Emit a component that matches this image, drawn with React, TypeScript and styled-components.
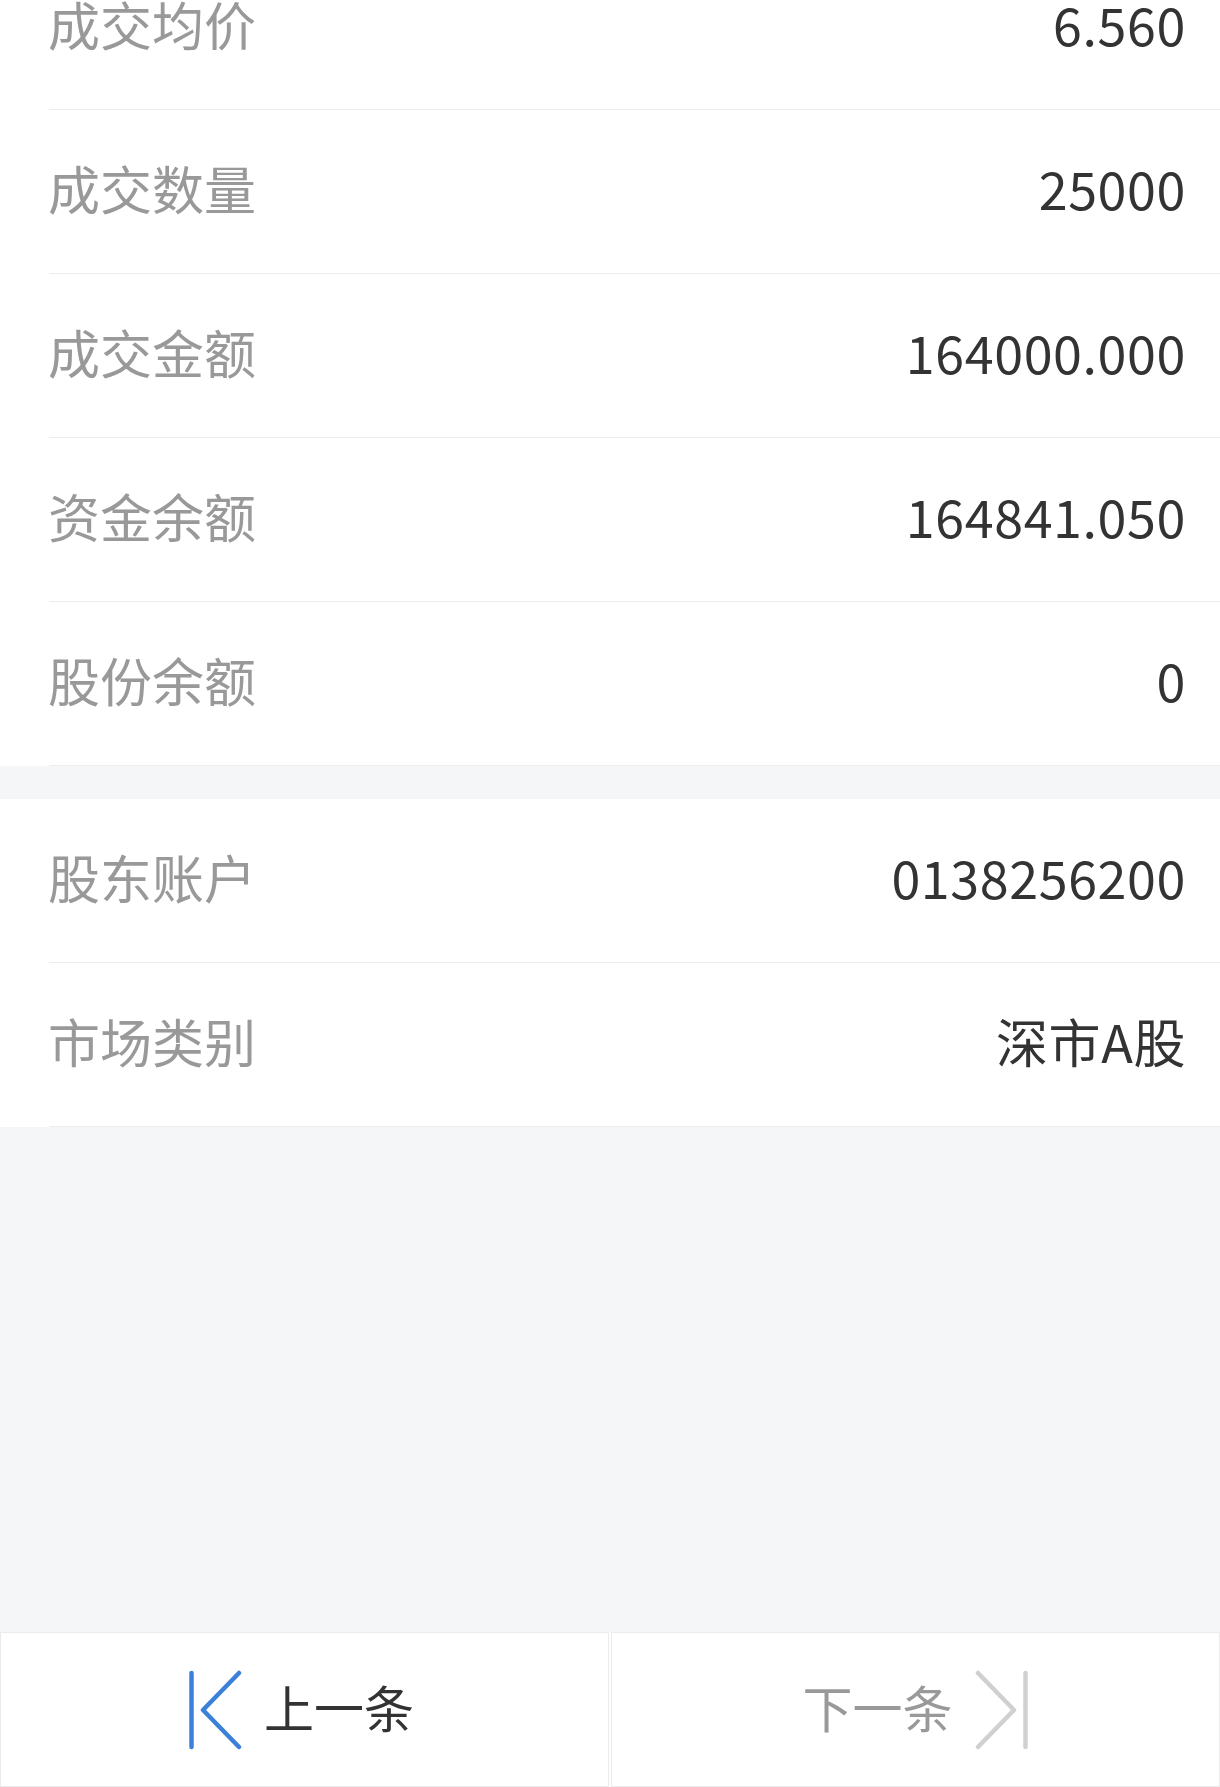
import styled, { createGlobalStyle } from "styled-components";

const GlobalStyle = createGlobalStyle`
  html, body {
    margin: 0;
    padding: 0;
    background: #f5f6f8;
  }
  * {
    box-sizing: border-box;
  }
`;

const Page = styled.div`
  display: flex;
  flex-direction: column;
  height: 1787px;
  overflow: hidden;
  background: #f5f6f8;
  font-family: "Noto Sans CJK SC", "Noto Sans", sans-serif;
`;

const Section = styled.div<{ $offset?: number }>`
  display: flex;
  flex-direction: column;
  background: #ffffff;
  margin-top: ${(p) => p.$offset ?? 0}px;
`;

const Row = styled.div`
  position: relative;
  display: flex;
  align-items: center;
  justify-content: space-between;
  height: 164px;
  padding: 0 34px 8px 48px;

  &::after {
    content: "";
    position: absolute;
    left: 49px;
    right: 0;
    bottom: 0;
    height: 1px;
    background: #ededed;
  }
`;

const Label = styled.span`
  font-size: 52px;
  color: #999999;
  line-height: 1;
`;

const Value = styled.span`
  font-size: 52px;
  color: #333333;
  line-height: 1;
  letter-spacing: 0.6px;
`;

const Band = styled.div`
  height: 33px;
  flex-shrink: 0;
`;

const Spacer = styled.div`
  flex: 1;
`;

const BottomBar = styled.div`
  display: grid;
  grid-template-columns: 1fr 1fr;
  column-gap: 2px;
  height: 155px;
  flex-shrink: 0;
  background: #ffffff;
`;

const NavButton = styled.button<{ $active: boolean }>`
  display: flex;
  align-items: center;
  justify-content: center;
  gap: 22px;
  height: 100%;
  border: 1px solid #ebebeb;
  background: #ffffff;
  padding: 0 ${(p) => (p.$active ? "7px 0 0" : "0 0 0")};
  font-family: inherit;
  font-size: 50px;
  color: ${(p) => (p.$active ? "#333333" : "#999999")};
  cursor: pointer;
`;

const NavText = styled.span`
  line-height: 1;
  margin-bottom: 7px;
`;

const NavIcon = styled.svg`
  width: 54px;
  height: 80px;
  flex-shrink: 0;
`;

function FirstIcon({ color }: { color: string }) {
  return (
    <NavIcon viewBox="0 0 54 80">
      <g fill="none" stroke={color} strokeWidth={4.5} strokeLinecap="round" strokeLinejoin="round">
        <line x1="3.5" y1="3" x2="3.5" y2="77" />
        <polyline points="51,3 15,40 51,77" />
      </g>
    </NavIcon>
  );
}

function LastIcon({ color }: { color: string }) {
  return (
    <NavIcon viewBox="0 0 54 80">
      <g fill="none" stroke={color} strokeWidth={4.5} strokeLinecap="round" strokeLinejoin="round">
        <line x1="50.5" y1="3" x2="50.5" y2="77" />
        <polyline points="3,3 39,40 3,77" />
      </g>
    </NavIcon>
  );
}

const tradeRows = [
  { label: "成交均价", value: "6.560" },
  { label: "成交数量", value: "25000" },
  { label: "成交金额", value: "164000.000" },
  { label: "资金余额", value: "164841.050" },
  { label: "股份余额", value: "0" },
];

const accountRows = [
  { label: "股东账户", value: "0138256200" },
  { label: "市场类别", value: "深市A股" },
];

export default function App() {
  return (
    <>
      <GlobalStyle />
      <Page>
        <Section $offset={-54}>
          {tradeRows.map((r) => (
            <Row key={r.label}>
              <Label>{r.label}</Label>
              <Value>{r.value}</Value>
            </Row>
          ))}
        </Section>
        <Band />
        <Section>
          {accountRows.map((r) => (
            <Row key={r.label}>
              <Label>{r.label}</Label>
              <Value>{r.value}</Value>
            </Row>
          ))}
        </Section>
        <Spacer />
        <BottomBar>
          <NavButton $active>
            <FirstIcon color="#3b80d9" />
            <NavText>上一条</NavText>
          </NavButton>
          <NavButton $active={false}>
            <NavText>下一条</NavText>
            <LastIcon color="#d0d0d0" />
          </NavButton>
        </BottomBar>
      </Page>
    </>
  );
}
